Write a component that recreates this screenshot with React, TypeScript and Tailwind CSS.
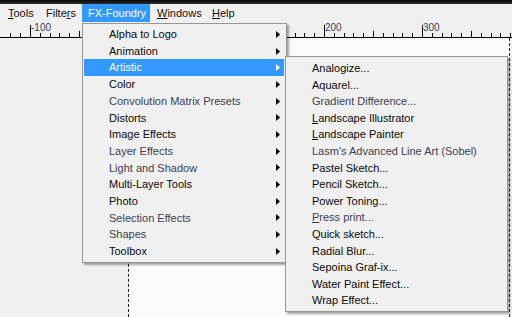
import React from 'react';

const font = { fontFamily: '"Liberation Sans", Arial, sans-serif' };

type Entry = { label: React.ReactNode; dim?: boolean; active?: boolean };

const filterMenu: Entry[] = [
  { label: 'Alpha to Logo' },
  { label: 'Animation' },
  { label: 'Artistic', active: true },
  { label: 'Color' },
  { label: 'Convolution Matrix Presets', dim: true },
  { label: 'Distorts' },
  { label: 'Image Effects' },
  { label: 'Layer Effects', dim: true },
  { label: 'Light and Shadow', dim: true },
  { label: 'Multi-Layer Tools' },
  { label: 'Photo' },
  { label: 'Selection Effects', dim: true },
  { label: 'Shapes', dim: true },
  { label: 'Toolbox' },
];

const artisticMenu: Entry[] = [
  { label: 'Analogize...' },
  { label: 'Aquarel...' },
  { label: 'Gradient Difference...', dim: true },
  { label: <><u>L</u>andscape Illustrator</> },
  { label: <><u>L</u>andscape Painter</> },
  { label: "Lasm's Advanced Line Art (Sobel)", dim: true },
  { label: 'Pastel Sketch...' },
  { label: 'Pencil Sketch...' },
  { label: 'Power Toning...' },
  { label: <><u>P</u>ress print...</>, dim: true },
  { label: 'Quick sketch...' },
  { label: 'Radial Blur...' },
  { label: 'Sepoina Graf-ix...' },
  { label: 'Water Paint Effect...' },
  { label: 'Wrap Effect...' },
];

function Arrow({ white }: { white?: boolean }) {
  return (
    <svg width="4" height="7" viewBox="0 0 4 7" className="shrink-0">
      <path d="M0 0 L4 3.5 L0 7 Z" fill={white ? '#ffffff' : '#000000'} />
    </svg>
  );
}

function Ruler() {
  const ticks: React.ReactNode[] = [];
  for (let u = -120; u <= 400; u += 10) {
    const x = Math.round(128 + u * 0.98) + 0.5;
    const h = u % 100 === 0 ? 12 : u % 50 === 0 ? 6 : 4;
    ticks.push(<line key={u} x1={x} x2={x} y1={15 - h} y2={15} stroke="#000" strokeWidth="1" />);
  }
  return (
    <div className="relative h-[16px] shrink-0">
      <svg width="512" height="16" className="absolute inset-0">
        {ticks}
        <line x1="0" x2="512" y1="15.5" y2="15.5" stroke="#000" strokeWidth="1" />
      </svg>
      {[
        { v: '-100', x: 31 },
        { v: '100', x: 227 },
        { v: '200', x: 325 },
        { v: '300', x: 423 },
      ].map((l) => (
        <span
          key={l.v}
          className="absolute top-[1px] text-[10px] leading-[10px] text-[#3b3f5c]"
          style={{ left: l.x }}
        >
          {l.v}
        </span>
      ))}
    </div>
  );
}

export default function App() {
  return (
    <div className="relative w-[512px] h-[317px] overflow-hidden bg-[#f0f0f0] flex flex-col text-[11px] text-black" style={font}>
      <div className="h-[4px] shrink-0 bg-gradient-to-b from-[#0a0a0a] to-[#2a2a2a]" />

      {/* menubar */}
      <div className="h-[18px] shrink-0 flex items-stretch pl-[2px] bg-[#f0f0f0] text-[#111]">
        <div className="w-[38px] pl-[6px] flex items-center"><span><u>T</u>ools</span></div>
        <div className="w-[42px] pl-[6px] flex items-center"><span>Filte<u>r</u>s</span></div>
        <div className="w-[68px] pl-[6px] flex items-center bg-[#3399ff] text-white"><span>FX-Foundry</span></div>
        <div className="w-[56px] pl-[7px] flex items-center"><span><u>W</u>indows</span></div>
        <div className="w-[40px] pl-[6px] flex items-center"><span><u>H</u>elp</span></div>
      </div>

      <Ruler />

      {/* canvas area */}
      <div className="flex-1 flex">
        <div className="w-[128px] shrink-0" />
        <div className="w-[382px] bg-[#fbfbfb] border-l border-r border-dashed border-[#222]" />
      </div>

      {/* FX-Foundry menu */}
      <div className="absolute left-[82px] top-[23px] w-[205px] bg-[#f0f0f0] border border-[#979797] pt-[2px] pb-[2px] pl-[1px] pr-[2px] shadow-[2px_2px_2px_rgba(0,0,0,0.35)]">
        {filterMenu.map((e, i) => (
          <div
            key={i}
            className={`h-[16.7px] flex items-center justify-between pl-[25px] pr-[4px] ${
              e.active ? 'bg-[#3399ff] text-white' : e.dim ? 'text-[#3c3f52]' : 'text-[#0a0a0a]'
            }`}
          >
            <span>{e.label}</span>
            <Arrow white={e.active} />
          </div>
        ))}
      </div>

      {/* Artistic submenu */}
      <div className="absolute left-[285px] top-[56px] w-[223px] bg-[#f0f0f0] border border-[#979797] pt-[3px] pb-[2px] shadow-[2px_2px_2px_rgba(0,0,0,0.35)]">
        {artisticMenu.map((e, i) => (
          <div
            key={i}
            className={`h-[16.6px] flex items-center pl-[26px] ${e.dim ? 'text-[#3c3f52]' : 'text-[#0a0a0a]'}`}
          >
            <span>{e.label}</span>
          </div>
        ))}
      </div>
    </div>
  );
}
